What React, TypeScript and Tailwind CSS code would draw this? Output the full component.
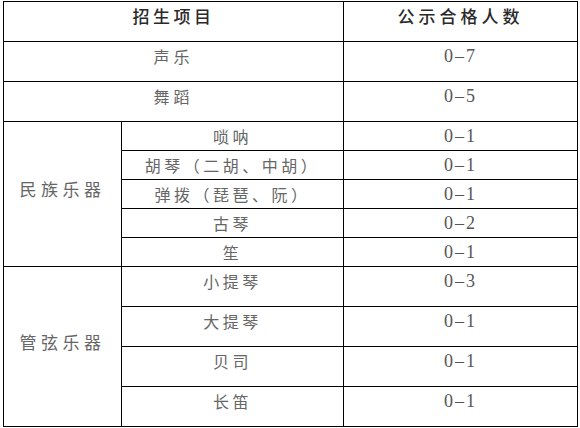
const rows: { item: string; count: string; tall: boolean; group?: string; span?: number }[] = [
  { item: "唢呐", count: "0–1", tall: false, group: "民族乐器", span: 5 },
  { item: "胡琴（二胡、中胡）", count: "0–1", tall: false },
  { item: "弹拨（琵琶、阮）", count: "0–1", tall: false },
  { item: "古琴", count: "0–2", tall: false },
  { item: "笙", count: "0–1", tall: false },
  { item: "小提琴", count: "0–3", tall: true, group: "管弦乐器", span: 4 },
  { item: "大提琴", count: "0–1", tall: true },
  { item: "贝司", count: "0–1", tall: true },
  { item: "长笛", count: "0–1", tall: true },
];

const cjk = "font-['Noto_Sans_CJK_SC',sans-serif]";
const num = "font-['Liberation_Serif','Noto_Sans_CJK_SC',serif]";

function Num({ v }: { v: string }) {
  return (
    <td className="border border-black p-0 align-top">
      <div className={`h-[28px] leading-[28px] text-center text-[18px] tracking-[2px] text-[#555] ${num}`}>{v}</div>
    </td>
  );
}

function Item({ v }: { v: string }) {
  return (
    <td className="border border-black p-0 align-top">
      <div className={`h-[28px] leading-[28px] text-center text-[16px] tracking-[3.5px] text-[#666] ${cjk}`}>{v}</div>
    </td>
  );
}

export default function App() {
  return (
    <div className="w-[580px] h-[428px] bg-white pt-px pl-[3px]">
      <table className="w-[574px] table-fixed border-collapse">
        <colgroup>
          <col className="w-[118px]" />
          <col className="w-[222px]" />
          <col className="w-[234px]" />
        </colgroup>
        <tbody>
          <tr className="h-[40px]">
            <td colSpan={2} className="border border-black p-0 align-top">
              <div className={`h-[28px] leading-[28px] text-center text-[17px] tracking-[3.5px] text-[#2a2a2a] font-medium ${cjk}`}>招生项目</div>
            </td>
            <td className="border border-black p-0 align-top">
              <div className={`h-[28px] leading-[28px] text-center text-[17px] tracking-[4px] text-[#2a2a2a] font-medium ${cjk}`}>公示合格人数</div>
            </td>
          </tr>
          <tr className="h-[40px]">
            <td colSpan={2} className="border border-black p-0 align-top">
              <div className={`h-[28px] leading-[28px] text-center text-[16px] tracking-[4px] text-[#666] ${cjk}`}>声乐</div>
            </td>
            <Num v="0–7" />
          </tr>
          <tr className="h-[40px]">
            <td colSpan={2} className="border border-black p-0 align-top">
              <div className={`h-[28px] leading-[28px] text-center text-[16px] tracking-[4px] text-[#666] ${cjk}`}>舞蹈</div>
            </td>
            <Num v="0–5" />
          </tr>
          {rows.map((r) => (
            <tr key={r.item} className={r.tall ? "h-[40px]" : "h-[29px]"}>
              {r.group && (
                <td rowSpan={r.span} className="border border-black p-0 align-middle">
                  <div className={`pb-[10px] text-center text-[17px] tracking-[4.5px] text-[#666] ${cjk}`}>{r.group}</div>
                </td>
              )}
              <Item v={r.item} />
              <Num v={r.count} />
            </tr>
          ))}
        </tbody>
      </table>
    </div>
  );
}
